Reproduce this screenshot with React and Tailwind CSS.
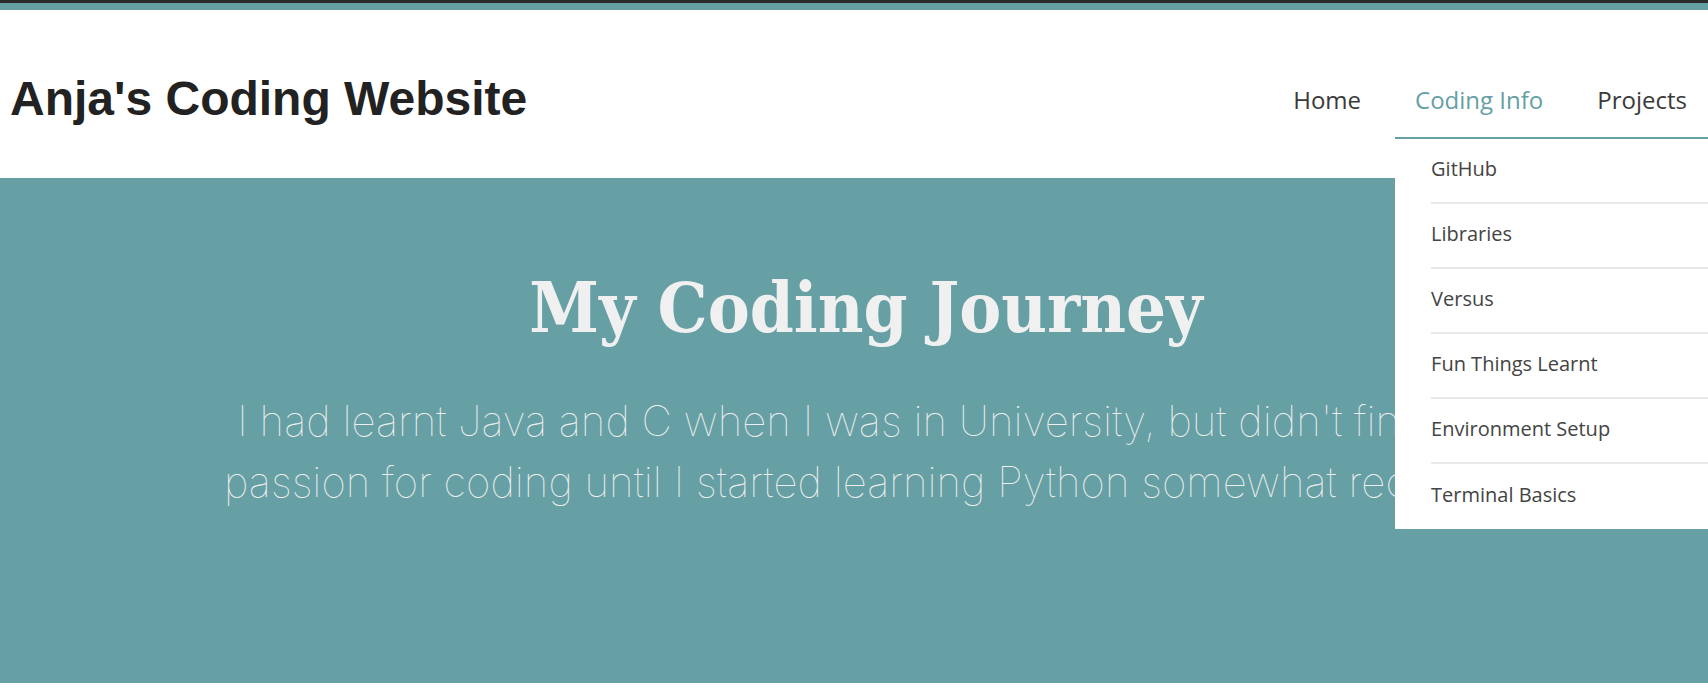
import React from 'react';

const codingLinks = [
  'GitHub',
  'Libraries',
  'Versus',
  'Fun Things Learnt',
  'Environment Setup',
  'Terminal Basics',
];

function Dropdown() {
  return (
    <ul className="absolute left-0 top-full w-[314px] bg-white border-t-2 border-[#66a0a4] z-20">
      {codingLinks.map((label, i) => (
        <li key={label} className="pl-9">
          <a
            href="#"
            className={`flex h-[65px] items-center pb-1 text-[20px] text-[#444] ${
              i < codingLinks.length - 1 ? 'border-b-2 border-[#e8e8e8]' : ''
            }`}
          >
            {label}
          </a>
        </li>
      ))}
    </ul>
  );
}

export default function App() {
  return (
    <div className="min-h-screen bg-white overflow-hidden">
      {/* top strip */}
      <div className="h-[3px] bg-[#2b2b2b]" />
      <div className="h-[7px] bg-[#66a0a4]" />

      <header className="h-[168px] pt-[10px] flex items-center justify-between bg-white relative z-10">
        <h1 className="pl-[10px] text-[48px] font-bold text-[#222] font-['Liberation_Sans',Arial,sans-serif] leading-tight">
          Anja's Coding Website
        </h1>
        <nav className="font-['Open_Sans',sans-serif]">
          <ul className="flex gap-[14px] pr-px">
            <li>
              <a href="#" className="block px-5 pt-[21px] pb-[19px] text-[24px] leading-[36px] text-[#3a3a3a]">
                Home
              </a>
            </li>
            <li className="relative">
              <a href="#" className="block px-5 pt-[21px] pb-[19px] text-[24px] leading-[36px] text-[#66a0a4]">
                Coding Info
              </a>
              <Dropdown />
            </li>
            <li>
              <a href="#" className="block px-5 pt-[21px] pb-[19px] text-[24px] leading-[36px] text-[#3a3a3a]">
                Projects
              </a>
            </li>
          </ul>
        </nav>
      </header>

      <section className="h-[505px] bg-[#66a0a4] pt-[88px] pl-6 text-center">
        <h2 className="text-[70px] font-bold leading-[84px] text-[#f0f0f0] font-['DejaVu_Serif_Condensed','DejaVu_Serif',serif]">
          My Coding Journey
        </h2>
        <p className="mx-auto mt-[40px] max-w-[1360px] text-[42px] leading-[61px] font-thin text-[#eeeeee] font-['Inter',sans-serif]">
          I had learnt Java and C when I was in University, but didn't find my passion for coding until I started learning Python somewhat recently.
        </p>
      </section>
    </div>
  );
}
